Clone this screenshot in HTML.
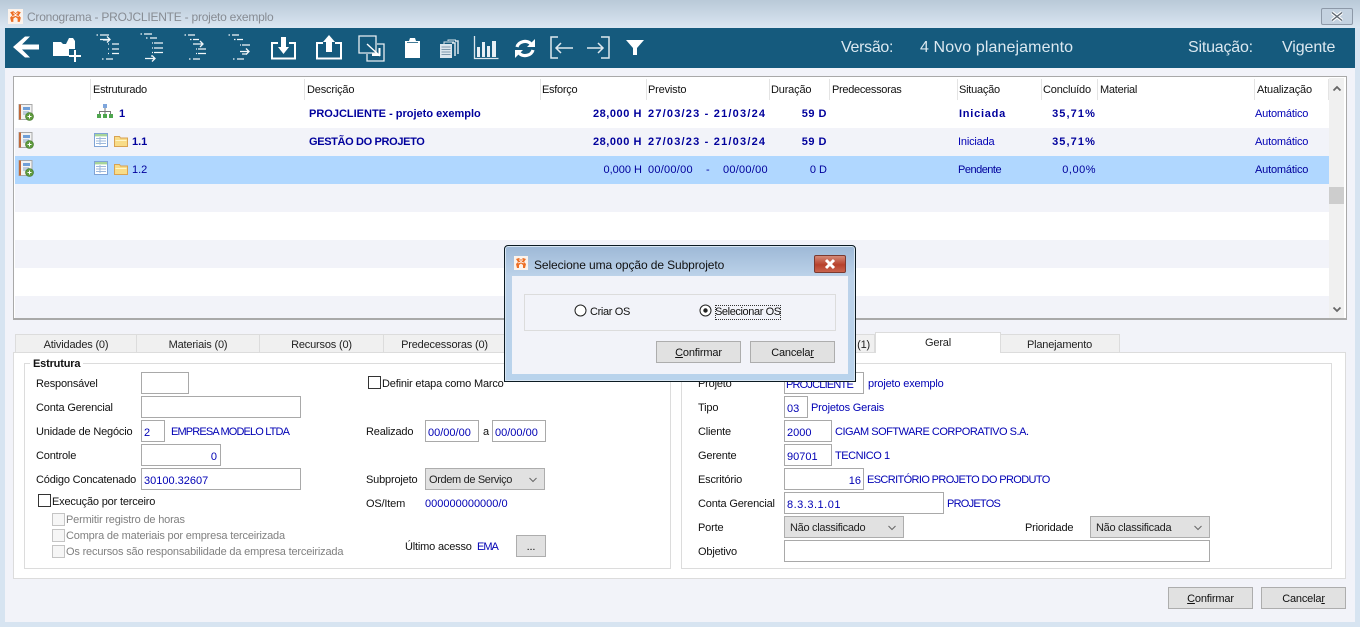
<!DOCTYPE html>
<html lang="pt"><head><meta charset="utf-8"><title>Cronograma</title>
<style>
*{box-sizing:border-box}
html,body{margin:0;padding:0}
body{width:1360px;height:627px;overflow:hidden;position:relative;background:#d7e4f1;font:11px/14px "Liberation Sans",sans-serif;color:#111;letter-spacing:-.18px}
.a{position:absolute}
.t{position:absolute;white-space:nowrap;line-height:14px;margin-top:1px}
.v{color:#0000b4}
.b{font-weight:bold;color:#00009c;letter-spacing:0}
.r{text-align:right}
.i{position:absolute;background:#fff;border:1px solid #a9a9a9;color:#0000b4;padding:5px 2px 0;line-height:14px;white-space:nowrap;letter-spacing:0}
.s{position:absolute;background:#e1e1e1;border:1px solid #adadad;padding:4px 4px 0;line-height:14px;white-space:nowrap;color:#222;letter-spacing:-.3px}
.s svg{position:absolute;right:6px;top:8px}
.btn{position:absolute;background:#e1e1e1;border:1px solid #adadad;text-align:center;line-height:22px;height:22px;color:#111}
.c{position:absolute;width:13px;height:13px;border:1px solid #333;background:#fff}
.c.d{border-color:#c4c4c4;background:#f6f6f6}
.g{color:#808080}
.sep{position:absolute;top:79px;width:1px;height:21px;background:#e4e4e4}
.tab{position:absolute;top:334px;height:19px;background:#f0f0f0;border:1px solid #dcdcdc;border-left:0;text-align:center;line-height:20px;color:#222}
.h{margin-top:0;font-size:16px;line-height:20px;color:#dbe8f0;top:38px}
.d1{letter-spacing:1.2px}
.w{letter-spacing:.55px}
.n{letter-spacing:.5px}
.p{letter-spacing:1.1px}
u{text-decoration:underline}
</style></head><body>
<svg width="0" height="0" style="position:absolute"><defs>
<symbol id="nb" viewBox="0 0 16 17"><rect x="1" y="0.5" width="13" height="15" fill="#f2f2f2" stroke="#a8a8a8"/><rect x="1" y="0.5" width="2" height="15" fill="#c0693a"/><rect x="5" y="3" width="7" height="3" fill="#6f9fd8"/><path d="M5 8h6M5 10h4" stroke="#8aa6c8"/><circle cx="11.5" cy="12.5" r="4" fill="#5f9a3e" stroke="#3f7428" stroke-width=".6"/><path d="M9.500 12.500h4M11.500 10.500v4" stroke="#fff"/></symbol>
<symbol id="gr" viewBox="0 0 14 14"><rect x=".5" y=".5" width="13" height="13" fill="#fff" stroke="#7fa3d6"/><rect x="1" y="1" width="12" height="2.400" fill="#a6d49a"/><path d="M2 5.500h10M2 8h10M2 10.500h10M6 4v8" stroke="#9db8dc"/></symbol>
<symbol id="fo" viewBox="0 0 14 12"><path d="M.5 1.500h5l1 1.500h7v8.500h-13z" fill="#f8dc88" stroke="#d9a251"/><path d="M1.500 5h11v1h-11z" fill="#fff6c8"/></symbol>
<symbol id="lg" viewBox="0 0 14 14"><rect width="14" height="14" fill="#fbf3ec"/><path d="M2 3l3-1 2 2 2-2 3 1-2 3 2 2-1 4H9V9L7 7.500 5 9v3H3L2 8l2-2z" fill="#ed6f25"/><path d="M5 3.500l2 2 2-2M4 7l3-1 3 1" stroke="#fff" fill="none" stroke-width=".8"/></symbol>
<symbol id="dn" viewBox="0 0 10 6"><path d="M1.500 1l3.500 3.500L8.500 1" fill="none" stroke="#666"/></symbol>
</defs></svg>

<!-- window -->
<div class="a" style="left:0;top:0;width:1360px;height:28px;background:linear-gradient(#b9c9d8,#dae6f1)"></div>
<div class="a" style="left:5px;top:28px;width:1350px;height:594px;background:#f2f3f9"></div>
<svg class="a" style="left:8px;top:9px" width="15" height="15"><use href="#lg"/></svg>
<div class="t" style="left:27px;top:10px;margin-top:0;font-size:12px;color:#878c93;letter-spacing:-.23px">Cronograma - PROJCLIENTE - projeto exemplo</div>
<div class="a" style="left:1321px;top:8px;width:32px;height:17px;background:#c4d2e0;border:1px solid #8d99a8;border-radius:2px"></div>
<svg class="a" style="left:1330px;top:11px" width="14" height="11"><path d="M2 1.500l10 8M12 1.500l-10 8" stroke="#fff" stroke-width="3.400"/><path d="M2 1.500l10 8M12 1.500l-10 8" stroke="#5d6670" stroke-width="1.400"/></svg>

<!-- toolbar -->
<div class="a" style="left:5px;top:28px;width:1350px;height:40px;background:#155a7d"></div>
<svg class="a" style="left:0;top:28px" width="660" height="40" viewBox="0 28 660 40">
<g fill="#fff"><path d="M13 47l12-10.500h5l-8 8h17v5H22l8 8h-5z"/>
<path d="M53 42h8l2 2h3l3-6h4l2 3v8h-6v7H53z"/><path d="M74 50h2v5h5v2h-5v5h-2v-5h-5v-2h5z"/></g>
<g stroke="#f2f7fa" stroke-width="1.300" fill="none">
<path d="M96.500 35h1.500M100 35h9M103 40h5M112 44h7M112 49h7M112 53.500h7M102 59h1.500M106 59h7M108 44h1M108 49h1M108 53.500h1"/><path d="M100 39.500h10M107 36.500l3 3-3 3"/>
<path d="M140.500 34h1.500M144 34h8M146 38h1.500M150 38h7M154 43h9M154 48h9M154 52.500h9M152 43h1M152 48h1M152 52.500h1M151 56h1"/><path d="M145 58.500h10M152 55.500l3 3-3 3"/>
<path d="M184.500 35h1.500M188 35h7M190 39.500h1.500M193 39.500h6M198 49h8M198 53.500h8M196 49h1M196 53.500h1M189 59h1.500M193 59h7"/><path d="M193 44h10M200 41l3 3-3 3"/>
<path d="M228.500 35h1.500M232 35h7M234 39.500h1.500M237 39.500h6M242 45h8M242 54h5M240 45h1M233 59h1.500M237 59h7"/><path d="M240 51.500h9M246 48.500l3 3-3 3"/>
</g>
<g fill="none" stroke="#fff" stroke-width="2">
<path d="M278 43h-6v15.500h23V43h-6"/><path d="M323 43h-6v15.500h24V43h-6"/>
<path d="M359 36h17v17h-17z" stroke="#e8eef2" stroke-width="1.300"/><path d="M377 44h7v17h-17v-7" stroke="#e8eef2" stroke-width="1.300"/><path d="M367 44l13 12" stroke-width="1.400"/>
</g>
<g fill="#fff">
<path d="M281 37h5v10h3l-5.500 7-5.500-7h3z"/>
<path d="M326 52V42h-3l6-7 6 7h-3v10z"/>
<path d="M372 56h8.500v-8l-2 0v5.500h-6.500z"/>
<path d="M405 41h4l1-3h5l1 3h4v17h-15z"/>
<path d="M440 44h12v14h-12z" fill="#dbe6ec"/>
</g>
<path d="M407 42.500h11" stroke="#155a7d" stroke-width=".8"/>
<path d="M441.500 47h9M441.500 49.500h9M441.500 52h9M441.500 54.500h9" stroke="#7d98ab"/><path d="M452 43h3v13M455 41h3v13" fill="none" stroke="#dbe6ec" stroke-width="1.500"/><path d="M444 44v-2h10M448 41v-1h8" fill="none" stroke="#dbe6ec"/>
<path d="M474.500 36v22.500h24" fill="none" stroke="#dde7ed" stroke-width="1.300"/>
<path d="M477 47h3v10h-3zM482 42h3v15h-3zM487 46h3v11h-3zM492 41h4v16h-4z" fill="#e8eff4"/>
<g fill="none" stroke="#fff" stroke-width="3.200"><path d="M517 47a8 7 0 0 1 14-3"/><path d="M533 50a8 7 0 0 1-14 3"/></g>
<path d="M535 39v8h-8zM515 58v-8h8z" fill="#fff"/>
<g fill="none" stroke="#dfe9ef" stroke-width="1.500"><path d="M558 37h-7v21h7M573 48h-17M561 43l-5 5 5 5"/><path d="M587 48h16M598 43l5 5-5 5M601 37h8v21h-8"/></g>
<path d="M626 40h18l-7 8v7h-4v-7z" fill="#fff"/>
</svg>
<div class="t h" style="left:841px;letter-spacing:-.3px">Versão:</div>
<div class="t h" style="left:920px;letter-spacing:.1px">4 Novo planejamento</div>
<div class="t h" style="left:1188px;letter-spacing:-.2px">Situação:</div>
<div class="t h" style="left:1282px;letter-spacing:-.1px">Vigente</div>

<!-- grid -->
<div class="a" style="left:13px;top:76px;width:1334px;height:244px;background:#fff;border:1px solid #a9a9a9;border-width:1px 1px 2px 1px"></div>
<div class="a" style="left:15px;top:128px;width:1314px;height:28px;background:#f2f3f9"></div>
<div class="a" style="left:15px;top:156px;width:1314px;height:28px;background:#b0d7ff"></div>
<div class="a" style="left:15px;top:184px;width:1314px;height:28px;background:#f2f3f9"></div>
<div class="a" style="left:15px;top:240px;width:1314px;height:28px;background:#f2f3f9"></div>
<div class="a" style="left:15px;top:296px;width:1314px;height:22px;background:#f2f3f9"></div>
<div class="a" style="left:1329px;top:78px;width:15px;height:240px;background:#f0f0f0"></div>
<div class="a" style="left:1329px;top:187px;width:15px;height:17px;background:#cdcdcd"></div>
<svg class="a" style="left:1332px;top:85px" width="10" height="7"><path d="M1.500 5.500l3.500-3.500 3.500 3.500" fill="none" stroke="#666" stroke-width="1.800"/></svg>
<svg class="a" style="left:1332px;top:306px" width="10" height="7"><path d="M1.500 1.500l3.500 3.500 3.500-3.500" fill="none" stroke="#666" stroke-width="1.800"/></svg>

<i class="sep" style="left:90px"></i><i class="sep" style="left:304px"></i><i class="sep" style="left:540px"></i><i class="sep" style="left:646px"></i><i class="sep" style="left:769px"></i><i class="sep" style="left:829px"></i><i class="sep" style="left:957px"></i><i class="sep" style="left:1041px"></i><i class="sep" style="left:1097px"></i><i class="sep" style="left:1254px"></i><i class="sep" style="left:1328px"></i>
<div class="t" style="left:93px;top:82px;letter-spacing:-.27px">Estruturado</div>
<div class="t" style="left:307px;top:82px">Descrição</div>
<div class="t" style="left:542px;top:82px;letter-spacing:-.28px">Esforço</div>
<div class="t" style="left:648px;top:82px">Previsto</div>
<div class="t" style="left:771px;top:82px">Duração</div>
<div class="t" style="left:832px;top:82px;letter-spacing:-.3px">Predecessoras</div>
<div class="t" style="left:959px;top:82px;letter-spacing:-.25px">Situação</div>
<div class="t" style="left:1043px;top:82px">Concluído</div>
<div class="t" style="left:1100px;top:82px;letter-spacing:-.25px">Material</div>
<div class="t" style="left:1257px;top:82px">Atualização</div>

<svg class="a" style="left:18px;top:104px" width="16" height="17"><use href="#nb"/></svg>
<svg class="a" style="left:18px;top:132px" width="16" height="17"><use href="#nb"/></svg>
<svg class="a" style="left:18px;top:160px" width="16" height="17"><use href="#nb"/></svg>
<svg class="a" style="left:97px;top:104px" width="17" height="15"><rect x="6" y="0" width="4" height="4" fill="#7ea6dc"/><path d="M8 4v3M2.500 10V7.500h11V10M8 7v3" stroke="#777" fill="none"/><path d="M0 10h4v4H0zM6 10h4v4H6zM12 10h4v4h-4z" fill="#4ea64e"/></svg>
<svg class="a" style="left:94px;top:133px" width="14" height="14"><use href="#gr"/></svg>
<svg class="a" style="left:114px;top:135px" width="14" height="12"><use href="#fo"/></svg>
<svg class="a" style="left:94px;top:161px" width="14" height="14"><use href="#gr"/></svg>
<svg class="a" style="left:114px;top:163px" width="14" height="12"><use href="#fo"/></svg>

<div class="t b" style="left:119px;top:106px">1</div>
<div class="t b" style="left:132px;top:134px">1.1</div>
<div class="t" style="left:132px;top:162px;color:#00009c;letter-spacing:0">1.2</div>
<div class="t b" style="left:309px;top:106px">PROJCLIENTE - projeto exemplo</div>
<div class="t b" style="left:309px;top:134px;letter-spacing:-.35px">GESTÃO DO PROJETO</div>

<div class="t b r w" style="left:560px;width:82px;top:106px">28,000 H</div>
<div class="t b r w" style="left:560px;width:82px;top:134px">28,000 H</div>
<div class="t r" style="left:560px;width:82px;top:162px;color:#00009c;letter-spacing:0">0,000 H</div>
<div class="t b d1" style="left:648px;top:106px">27/03/23 - 21/03/24</div>
<div class="t b d1" style="left:648px;top:134px">27/03/23 - 21/03/24</div>
<div class="t" style="left:648px;top:162px;color:#00009c;letter-spacing:.25px">00/00/00</div>
<div class="t" style="left:706px;top:162px;color:#00009c">-</div>
<div class="t" style="left:723px;top:162px;color:#00009c;letter-spacing:.25px">00/00/00</div>
<div class="t b r n" style="left:770px;width:57px;top:106px">59 D</div>
<div class="t b r n" style="left:770px;width:57px;top:134px">59 D</div>
<div class="t r" style="left:770px;width:57px;top:162px;color:#00009c;letter-spacing:0">0 D</div>
<div class="t b" style="left:959px;top:106px;letter-spacing:.75px">Iniciada</div>
<div class="t v" style="left:958px;top:134px">Iniciada</div>
<div class="t" style="left:958px;top:162px;color:#00009c;letter-spacing:-.5px">Pendente</div>
<div class="t b r p" style="left:1030px;width:66px;top:106px">35,71%</div>
<div class="t b r p" style="left:1030px;width:66px;top:134px">35,71%</div>
<div class="t r" style="left:1030px;width:66px;top:162px;color:#00009c;letter-spacing:.5px">0,00%</div>
<div class="t v" style="left:1255px;top:106px">Automático</div>
<div class="t v" style="left:1255px;top:134px">Automático</div>
<div class="t" style="left:1255px;top:162px;color:#00009c">Automático</div>

<!-- tabs -->
<div class="a" style="left:13px;top:352px;width:1333px;height:227px;background:#fff;border:1px solid #dcdcdc"></div>
<div class="tab" style="left:15px;width:122px;border-left:1px solid #dcdcdc">Atividades (0)</div>
<div class="tab" style="left:137px;width:123px">Materiais (0)</div>
<div class="tab" style="left:260px;width:124px">Recursos (0)</div>
<div class="tab" style="left:384px;width:122px">Predecessoras (0)</div>
<div class="tab" style="left:760px;width:115px;text-align:right;padding-right:4px">(1)</div>
<div class="tab" style="left:1000px;width:120px">Planejamento</div>
<div class="a" style="left:875px;top:332px;width:126px;height:21px;background:#fff;border:1px solid #dcdcdc;border-bottom:0;text-align:center;line-height:21px;color:#222">Geral</div>

<!-- left group -->
<div class="a" style="left:24px;top:363px;width:647px;height:206px;border:1px solid #dcdcdc"></div>
<div class="t" style="left:30px;top:356px;background:#fff;padding:0 3px;font-weight:bold;color:#111">Estrutura</div>
<div class="t" style="left:36px;top:376px">Responsável</div>
<div class="i" style="left:141px;top:372px;width:48px;height:22px"></div>
<div class="t" style="left:36px;top:400px">Conta Gerencial</div>
<div class="i" style="left:141px;top:396px;width:160px;height:22px"></div>
<div class="t" style="left:36px;top:424px">Unidade de Negócio</div>
<div class="i" style="left:141px;top:420px;width:24px;height:22px">2</div>
<div class="t v" style="left:171px;top:424px;letter-spacing:-.85px">EMPRESA MODELO LTDA</div>
<div class="t" style="left:36px;top:448px">Controle</div>
<div class="i r" style="left:141px;top:444px;width:80px;height:22px;padding-right:3px">0</div>
<div class="t" style="left:36px;top:472px">Código Concatenado</div>
<div class="i" style="left:141px;top:468px;width:160px;height:22px">30100.32607</div>
<div class="c" style="left:38px;top:494px"></div>
<div class="t" style="left:52px;top:494px">Execução por terceiro</div>
<div class="c d" style="left:52px;top:513px"></div>
<div class="t g" style="left:66px;top:512px">Permitir registro de horas</div>
<div class="c d" style="left:52px;top:529px"></div>
<div class="t g" style="left:66px;top:528px">Compra de materiais por empresa terceirizada</div>
<div class="c d" style="left:52px;top:545px"></div>
<div class="t g" style="left:66px;top:544px">Os recursos são responsabilidade da empresa terceirizada</div>

<div class="c" style="left:368px;top:376px"></div>
<div class="t" style="left:382px;top:376px">Definir etapa como Marco</div>
<div class="t" style="left:366px;top:424px">Realizado</div>
<div class="i" style="left:425px;top:420px;width:54px;height:22px">00/00/00</div>
<div class="t" style="left:483px;top:424px">a</div>
<div class="i" style="left:492px;top:420px;width:54px;height:22px">00/00/00</div>
<div class="t" style="left:366px;top:472px">Subprojeto</div>
<div class="s" style="left:425px;top:468px;width:120px;height:22px;padding-left:3px;letter-spacing:-.35px">Ordem de Serviço<svg width="10" height="6"><use href="#dn"/></svg></div>
<div class="t" style="left:366px;top:496px">OS/Item</div>
<div class="t v" style="left:425px;top:496px;letter-spacing:0">000000000000/0</div>
<div class="t" style="left:405px;top:539px">Último acesso</div>
<div class="t v" style="left:477px;top:539px;letter-spacing:-1px">EMA</div>
<div class="btn" style="left:516px;top:535px;width:30px">...</div>

<!-- right group -->
<div class="a" style="left:681px;top:363px;width:651px;height:206px;border:1px solid #dcdcdc"></div>
<div class="t" style="left:698px;top:376px">Projeto</div>
<div class="i" style="left:784px;top:372px;width:80px;height:22px;padding-left:1px;letter-spacing:-.8px">PROJCLIENTE</div>
<div class="t v" style="left:868px;top:376px">projeto exemplo</div>
<div class="t" style="left:698px;top:400px">Tipo</div>
<div class="i" style="left:784px;top:396px;width:24px;height:22px">03</div>
<div class="t v" style="left:811px;top:400px">Projetos Gerais</div>
<div class="t" style="left:698px;top:424px">Cliente</div>
<div class="i" style="left:784px;top:420px;width:48px;height:22px">2000</div>
<div class="t v" style="left:835px;top:424px;letter-spacing:-.48px">CIGAM SOFTWARE CORPORATIVO S.A.</div>
<div class="t" style="left:698px;top:448px">Gerente</div>
<div class="i" style="left:784px;top:444px;width:48px;height:22px">90701</div>
<div class="t v" style="left:835px;top:448px;letter-spacing:-.45px">TECNICO 1</div>
<div class="t" style="left:698px;top:472px">Escritório</div>
<div class="i r" style="left:784px;top:468px;width:80px;height:22px">16</div>
<div class="t v" style="left:867px;top:472px;letter-spacing:-.62px">ESCRITÓRIO PROJETO DO PRODUTO</div>
<div class="t" style="left:698px;top:496px">Conta Gerencial</div>
<div class="i" style="left:784px;top:492px;width:160px;height:22px;letter-spacing:.5px">8.3.3.1.01</div>
<div class="t v" style="left:947px;top:496px;letter-spacing:-.75px">PROJETOS</div>
<div class="t" style="left:698px;top:520px">Porte</div>
<div class="s" style="left:784px;top:516px;width:120px;height:22px;padding-left:5px">Não classificado<svg width="10" height="6"><use href="#dn"/></svg></div>
<div class="t" style="left:1025px;top:520px">Prioridade</div>
<div class="s" style="left:1090px;top:516px;width:120px;height:22px;padding-left:5px">Não classificada<svg width="10" height="6"><use href="#dn"/></svg></div>
<div class="t" style="left:698px;top:544px">Objetivo</div>
<div class="i" style="left:784px;top:540px;width:426px;height:22px"></div>

<div class="btn" style="left:1168px;top:587px;width:85px"><u>C</u>onfirmar</div>
<div class="btn" style="left:1261px;top:587px;width:85px">Cancela<u>r</u></div>

<!-- dialog -->
<div class="a" style="left:504px;top:245px;width:352px;height:137px;background:linear-gradient(#9db8d6 0,#bcd2e9 30px,#b9d3ec 100%);border:1px solid #0c1a22;border-radius:4px 4px 0 0;box-shadow:inset 0 0 0 1px #d8e6f3"></div>
<div class="a" style="left:512px;top:276px;width:336px;height:98px;background:#f2f3f9"></div>
<svg class="a" style="left:514px;top:256px" width="14" height="14"><use href="#lg"/></svg>
<div class="t" style="left:534px;top:258px;margin-top:0;font-size:12px;color:#111;letter-spacing:-.1px">Selecione uma opção de Subprojeto</div>
<div class="a" style="left:814px;top:255px;width:32px;height:18px;background:linear-gradient(#d58a78,#b7412c 55%,#c9634d);border:1px solid #7b3a30;border-radius:2px"></div>
<svg class="a" style="left:823px;top:258px" width="14" height="12"><path d="M3 2l8 8M11 2l-8 8" stroke="#fff" stroke-width="3"/></svg>
<div class="a" style="left:524px;top:294px;width:312px;height:37px;border:1px solid #dcdcdc"></div>
<svg class="a" style="left:574px;top:304px" width="13" height="13"><circle cx="6.500" cy="6.500" r="5.500" fill="#fff" stroke="#222"/></svg>
<div class="t" style="left:590px;top:304px;letter-spacing:-.35px">Criar OS</div>
<svg class="a" style="left:699px;top:304px" width="13" height="13"><circle cx="6.500" cy="6.500" r="5.500" fill="#fff" stroke="#222"/><circle cx="6.500" cy="6.500" r="2.200" fill="#222"/></svg>
<div class="t" style="left:715px;top:304px;outline:1px dotted #333;outline-offset:-1px;padding:0;height:15px;letter-spacing:-.4px">Selecionar OS</div>
<div class="btn" style="left:656px;top:341px;width:85px"><u>C</u>onfirmar</div>
<div class="btn" style="left:750px;top:341px;width:85px">Cancela<u>r</u></div>
</body></html>
